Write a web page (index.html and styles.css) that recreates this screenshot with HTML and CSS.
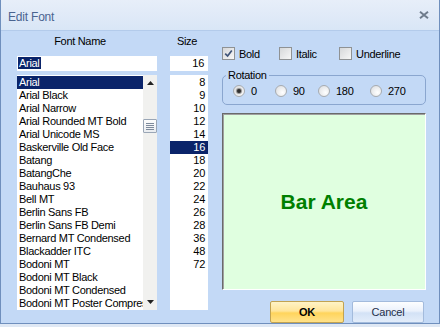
FILE: index.html
```html
<!DOCTYPE html>
<html>
<head>
<meta charset="utf-8">
<link rel="stylesheet" href="styles.css">
</head>
<body>
<div class="window">
  <div class="titlebar">
    <span class="title">Edit Font</span>
    <svg class="close" width="10" height="8" viewBox="0 0 10 8"><path d="M1 0.8 L9 7.2 M9 0.8 L1 7.2" stroke="#6f7c8c" stroke-width="2"/></svg>
  </div>
  <div class="body">
    <div class="col-font">
      <div class="hdr hdr-font">Font Name</div>
      <div class="input"><span class="hl">Arial</span></div>
      <div class="listbox">
        <ul class="items">
          <li class="sel">Arial</li>
          <li>Arial Black</li>
          <li>Arial Narrow</li>
          <li>Arial Rounded MT Bold</li>
          <li>Arial Unicode MS</li>
          <li>Baskerville Old Face</li>
          <li>Batang</li>
          <li>BatangChe</li>
          <li>Bauhaus 93</li>
          <li>Bell MT</li>
          <li>Berlin Sans FB</li>
          <li>Berlin Sans FB Demi</li>
          <li>Bernard MT Condensed</li>
          <li>Blackadder ITC</li>
          <li>Bodoni MT</li>
          <li>Bodoni MT Black</li>
          <li>Bodoni MT Condensed</li>
          <li>Bodoni MT Poster Compressed</li>
        </ul>
        <div class="scrollbar">
          <div class="sb-btn"><svg width="7" height="4" viewBox="0 0 7 4"><path d="M0 4 L3.5 0 L7 4 Z" fill="#222"/></svg></div>
          <div class="thumb"><svg width="10" height="9" viewBox="0 0 10 9"><path d="M1 1.5 H9 M1 3.5 H9 M1 5.5 H9 M1 7.5 H9" stroke="#7d8a9c" stroke-width="1"/></svg></div>
          <div class="sb-spacer"></div>
          <div class="sb-btn"><svg width="7" height="4" viewBox="0 0 7 4"><path d="M0 0 L3.5 4 L7 0 Z" fill="#222"/></svg></div>
        </div>
      </div>
    </div>
    <div class="col-size">
      <div class="hdr hdr-size">Size</div>
      <div class="input right">16</div>
      <ul class="items sizes">
        <li>8</li>
        <li>9</li>
        <li>10</li>
        <li>12</li>
        <li>14</li>
        <li class="sel">16</li>
        <li>18</li>
        <li>20</li>
        <li>22</li>
        <li>24</li>
        <li>26</li>
        <li>28</li>
        <li>36</li>
        <li>48</li>
        <li>72</li>
      </ul>
    </div>
    <div class="col-right">
      <div class="checks">
        <label class="chk chk-bold"><span class="box"><svg width="9" height="9" viewBox="0 0 9 9"><path d="M1.2 4.6 L3.6 7 L7.8 1.4" fill="none" stroke="#3f5478" stroke-width="1.7"/></svg></span><span class="lbl">Bold</span></label>
        <label class="chk chk-italic"><span class="box"></span><span class="lbl">Italic</span></label>
        <label class="chk"><span class="box"></span><span class="lbl">Underline</span></label>
      </div>
      <fieldset class="rotation">
        <legend>Rotation</legend>
        <div class="radios">
          <label class="rad rad-0"><span class="circle on"><span class="dot"></span></span><span class="lbl">0</span></label>
          <label class="rad rad-90"><span class="circle"></span><span class="lbl">90</span></label>
          <label class="rad rad-180"><span class="circle"></span><span class="lbl">180</span></label>
          <label class="rad"><span class="circle"></span><span class="lbl">270</span></label>
        </div>
      </fieldset>
      <div class="bararea">Bar Area</div>
      <div class="buttons">
        <button class="btn ok">OK</button>
        <button class="btn cancel">Cancel</button>
      </div>
    </div>
  </div>
</div>
</body>
</html>
```

FILE: styles.css
```css
html, body {
  margin: 0;
  padding: 0;
  background: #dfe8f4;
}

.window {
  width: 440px;
  height: 324px;
  box-sizing: border-box;
  background: #c3d9f6;
  border: 1px solid #6f8fbd;
  border-top: none;
  display: flex;
  flex-direction: column;
  font-family: "Liberation Sans", Arial, sans-serif;
  font-size: 11px;
  letter-spacing: -0.3px;
  color: #000;
}

.titlebar {
  height: 31px;
  flex: none;
  box-sizing: border-box;
  display: flex;
  align-items: center;
  justify-content: space-between;
  padding: 3px 10px 0 7px;
  background: linear-gradient(#e7eef9, #d9e6f6);
  border-bottom: 1px solid #b3cbeb;
}

.title {
  font-size: 12px;
  letter-spacing: -0.2px;
  color: #4a6490;
}

.close {
  margin-top: -3px;
}

.body {
  display: flex;
  padding: 3px 0 0 16px;
}

.col-font {
  width: 140px;
  margin-right: 13px;
}

.col-size {
  width: 38px;
  margin-right: 14px;
}

.col-right {
  width: 204px;
  padding-top: 13px;
}

.hdr {
  height: 14px;
  line-height: 14px;
  text-align: center;
}

.hdr-font {
  padding-right: 14px;
}

.hdr-size {
  padding-right: 4px;
}

.input {
  margin-top: 8px;
  height: 15px;
  line-height: 15px;
  background: #fff;
  padding: 0 1px;
  white-space: nowrap;
}

.input.right {
  text-align: right;
  padding-right: 4px;
}

.hl {
  background: #0a246a;
  color: #fff;
  padding: 0 1px;
}

.listbox {
  margin-top: 4px;
  height: 235px;
  background: #fff;
  display: flex;
}

.items {
  list-style: none;
  margin: 0;
  padding: 1px 0 0;
  flex: 1;
  min-width: 0;
  overflow: hidden;
}

.items li {
  height: 13px;
  line-height: 13px;
  padding-left: 2px;
  white-space: nowrap;
  overflow: hidden;
}

.items li.sel {
  background: #0a246a;
  color: #fff;
}

.sizes {
  margin-top: 4px;
  height: 235px;
  box-sizing: border-box;
  background: #fff;
  flex: none;
}

.sizes li {
  text-align: right;
  padding-right: 3px;
}

.scrollbar {
  width: 14px;
  flex: none;
  background: #f1f1ef;
  display: flex;
  flex-direction: column;
  align-items: center;
}

.sb-btn {
  height: 16px;
  width: 14px;
  display: flex;
  align-items: center;
  justify-content: center;
}

.sb-btn svg {
  display: block;
}

.thumb {
  margin-top: 28px;
  width: 12px;
  height: 12px;
  border: 1px solid #9aa6b6;
  border-radius: 1px;
  background: linear-gradient(#fdfdfd, #e9ecf0);
  display: flex;
  align-items: center;
  justify-content: center;
}

.sb-spacer {
  flex: 1;
}

.checks {
  display: flex;
  align-items: center;
  height: 13px;
}

.chk {
  display: flex;
  align-items: center;
}

.chk-bold {
  width: 57px;
}

.chk-italic {
  width: 60px;
}

.box {
  width: 13px;
  height: 13px;
  box-sizing: border-box;
  border: 1px solid #8f9294;
  background: linear-gradient(135deg, #d6d8da, #f7f7f7);
  display: flex;
  align-items: center;
  justify-content: center;
}

.box svg {
  display: block;
}

.chk .lbl {
  margin-left: 4px;
}

.rotation {
  margin: 9px 0 0;
  padding: 3px 4px 7px 3px;
  border: 1px solid #8aa6cf;
  border-radius: 5px;
  min-width: 0;
  box-sizing: border-box;
}

.rotation legend {
  padding: 0 2px;
  line-height: 13px;
}

.radios {
  display: flex;
  align-items: center;
  height: 12px;
  padding-left: 7px;
}

.rad {
  display: flex;
  align-items: center;
}

.rad-0 {
  width: 42px;
}

.rad-90 {
  width: 43px;
}

.rad-180 {
  width: 52px;
}

.circle {
  width: 12px;
  height: 12px;
  box-sizing: border-box;
  border-radius: 50%;
  border: 1px solid #a7abb0;
  background: radial-gradient(circle at 65% 65%, #ffffff, #d9dbde);
  display: flex;
  align-items: center;
  justify-content: center;
}

.dot {
  width: 4px;
  height: 4px;
  border-radius: 50%;
  background: #2f2f2f;
  box-shadow: 0 0 1px 1px #8a8a8a;
}

.rad .lbl {
  margin-left: 6px;
}

.bararea {
  margin-top: 8px;
  height: 177px;
  box-sizing: border-box;
  background: #e0ffe0;
  border: 1px solid;
  border-color: #6a6a6a #ffffff #ffffff #6a6a6a;
  box-shadow: inset 1px 1px 0 #a0a0a0;
  display: flex;
  align-items: center;
  justify-content: center;
  font-weight: bold;
  font-size: 21px;
  letter-spacing: 0;
  color: #008000;
}

.buttons {
  margin-top: 11px;
  display: flex;
  justify-content: flex-end;
  gap: 8px;
  padding-right: 2px;
}

.btn {
  height: 22px;
  margin: 0;
  padding: 0;
  font-family: "Liberation Sans", Arial, sans-serif;
  font-size: 11px;
  letter-spacing: -0.2px;
  border-radius: 2px;
  cursor: default;
}

.ok {
  width: 74px;
  font-weight: bold;
  color: #000;
  border: 1px solid #c2a352;
  background: linear-gradient(#fff3c6 0%, #ffe59a 45%, #ffd45c 55%, #ffe28a 100%);
}

.cancel {
  width: 72px;
  color: #1e2f4a;
  border: 1px solid #a3bbdc;
  background: linear-gradient(#fdfeff 0%, #eaf1fb 45%, #d3e2f6 55%, #e3edfa 100%);
}
```
